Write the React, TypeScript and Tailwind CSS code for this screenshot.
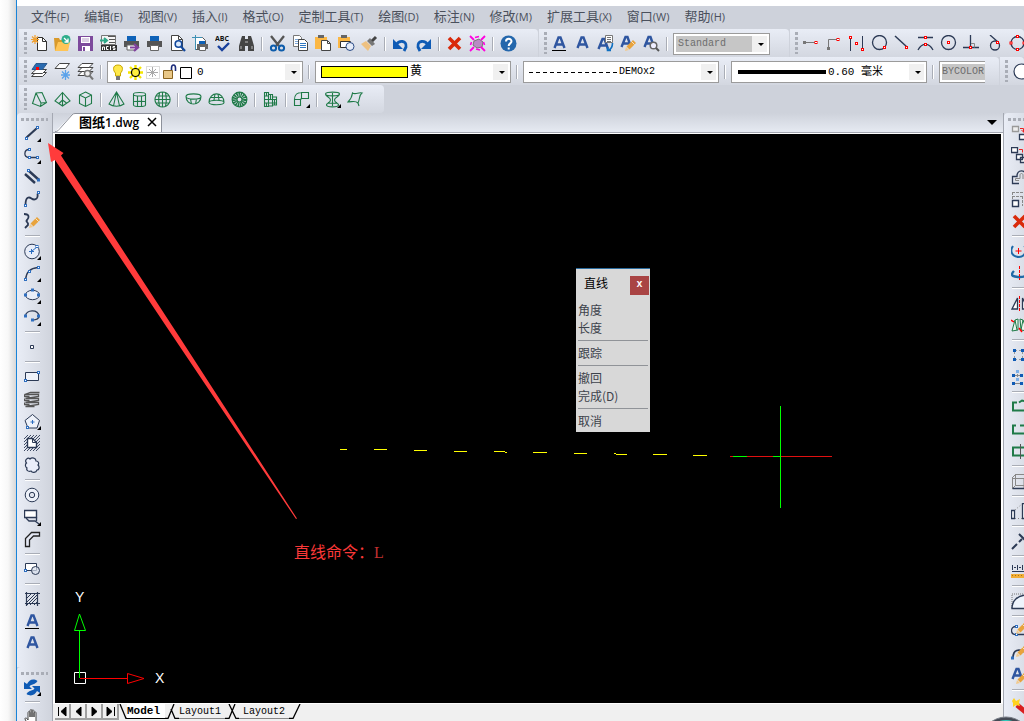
import type { ReactNode } from "react";

const GREEN = "#1f7a48";
const NAVY = "#2c3a55";
const BLUE = "#0f5bb5";
const RED = "#ff0000";

interface Item {
  name: string;
  icon: ReactNode;
}

type Entry = Item | "|";

// small square handle used by the drawing icons
function Pt({ x, y, c = "#2f6fc0" }: { x: number; y: number; c?: string }) {
  return <rect x={x - 1} y={y - 1} width="2" height="2" fill="#fff" stroke={c} />;
}

function Corner() {
  return <path d="M17 13v4h-4z" fill="#000" />;
}

function Pencil({ x = 0, y = 0 }: { x?: number; y?: number }) {
  return (
    <g transform={`translate(${x} ${y})`}>
      <path d="M0 11l1-4 3 3z" fill="#f3c98b" />
      <path d="M1.500 6.500L8 0l3 3-6.500 6.500z" fill="#e8a33d" />
      <path d="M6.500 1.500l3 3" stroke="#fff" strokeWidth="0.700" />
    </g>
  );
}

function LetterA({ line = false }: { line?: boolean }) {
  return (
    <>
      <path
        d="M3.500 13L7.500 2.500h2L13.500 13M5 9.500h7"
        fill="none"
        stroke="#2f56a0"
        strokeWidth="2.400"
      />
      {line && <path d="M1 15.500h14" stroke="#000" />}
    </>
  );
}

function SmallA() {
  return (
    <path
      d="M1.500 14L5.500 4h2L11 14M3 10.500h7"
      fill="none"
      stroke="#2f56a0"
      strokeWidth="2.400"
    />
  );
}

const cross = <path d="M3 3l11 11M14 3L3 14" stroke="#d92a0b" strokeWidth="3.600" />;

const standardBar: Entry[] = [
  {
    name: "New",
    icon: (
      <>
        <path d="M6.500 2.500h5l4 4v9h-9z" fill="#fff" stroke="#333" />
        <path d="M11.500 2.500v4h4" fill="none" stroke="#333" />
        <path d="M4 0v9M0 4.500h8M1 1.500l6 6M7 1.500l-6 6" stroke="#f0a030" strokeWidth="1.200" />
      </>
    ),
  },
  {
    name: "Open",
    icon: (
      <>
        <path d="M0 3h5l1 2h7v11H1z" fill="#d99a2b" />
        <path d="M4 7h12l-2 9H1z" fill="#ffc556" />
        <circle cx="12" cy="4.500" r="4.500" fill="#2fae8c" />
        <path d="M10 3l4 4M14 3.500V7h-3.500" stroke="#fff" strokeWidth="1.300" fill="none" />
      </>
    ),
  },
  {
    name: "Save",
    icon: (
      <>
        <path d="M1 1h15v15H1z" fill="#7d4a9c" />
        <path d="M4 2h9v6H4zM5 11h8v5H5z" fill="#fff" />
        <path d="M5 4h7M5 6h7" stroke="#b7a0c9" />
        <path d="M6 12h2v4H6z" fill="#7d4a9c" />
      </>
    ),
  },
  {
    name: "ACIS",
    icon: (
      <>
        <path d="M1.500.500h14v9h-14z" fill="#f5f5f5" stroke="#777" />
        <path d="M8 1.500h7.500M9 4.500h6M9 7.500h6" stroke="#555" strokeWidth="1.200" />
        <path d="M0 5.500h6M4 3l3 2.500L4 8" stroke="#2fa888" strokeWidth="2" fill="none" />
        <path d="M1 10h16v6H1z" fill="#333" />
        <path d="M2.500 15v-3h2v3M8.500 11.500h-2v3h2M10.500 11v4M15 11.500h-2V13h2v1.500h-2" stroke="#fff" fill="none" />
      </>
    ),
  },
  {
    name: "Export",
    icon: (
      <>
        <path d="M4 1h9v5H4z" fill="#0f62b8" />
        <path d="M1 6h15v6H1z" fill="#555" />
        <path d="M4 10h9v5H4z" fill="#fff" stroke="#666" />
        <path d="M7 12.500h7M11 9l4 3.500-4 3.500" stroke="#82429e" strokeWidth="2.200" fill="none" />
      </>
    ),
  },
  {
    name: "Print",
    icon: (
      <>
        <path d="M4 1h9v5H4z" fill="#0f62b8" />
        <path d="M1 6h15v6H1z" fill="#555" />
        <path d="M4.500 10.500h8v5h-8z" fill="#fff" stroke="#666" />
      </>
    ),
  },
  {
    name: "Preview",
    icon: (
      <>
        <path d="M2.500.500h7l4 4v11h-11z" fill="#fff" stroke="#444" />
        <path d="M9.500.500v4h4" fill="none" stroke="#444" />
        <circle cx="9.500" cy="9" r="3.300" fill="#dbe9fa" stroke="#12489c" strokeWidth="1.600" />
        <path d="M12 11.500l4 4.500" stroke="#12489c" strokeWidth="2.200" />
      </>
    ),
  },
  {
    name: "Page setup",
    icon: (
      <>
        <path d="M3.500 2.500h7l3 3v9h-10z" fill="#fff" stroke="#555" />
        <path d="M0 2.500h10M3.500 0v15" stroke="#3d91b5" />
        <path d="M7 6h6v3H7z" fill="#0f62b8" />
        <path d="M5 9h11v5H5z" fill="#666" />
        <path d="M7.500 11.500h6v4h-6z" fill="#fff" stroke="#666" />
      </>
    ),
  },
  {
    name: "Spelling",
    icon: (
      <>
        <text x="0" y="6" fontSize="7" fontWeight="700" fontFamily="Open Sans" fill="#111">
          ABC
        </text>
        <path d="M3 11l4 4 7-7" stroke="#173f9b" strokeWidth="2.400" fill="none" />
      </>
    ),
  },
  {
    name: "Find",
    icon: (
      <>
        <path d="M4 1h3v3h3V1h3l1 3 2 7v5h-6v-5H7v5H1v-5l2-7z" fill="#444" />
        <path d="M3 11v3M14 11v3M7 7h3" stroke="#bbb" />
      </>
    ),
  },
  "|",
  {
    name: "Cut",
    icon: (
      <>
        <path d="M2 1l8 10M15 1L7 11" stroke="#555" strokeWidth="2.300" />
        <circle cx="4.500" cy="13" r="2.600" fill="none" stroke="#0d5cab" strokeWidth="2" />
        <circle cx="12.500" cy="13" r="2.600" fill="none" stroke="#0d5cab" strokeWidth="2" />
      </>
    ),
  },
  {
    name: "Copy",
    icon: (
      <>
        <path d="M1.500.500h6l2 2v9h-8z" fill="#fff" stroke="#777" />
        <path d="M3 4.500h5M3 6.500h5M3 8.500h3" stroke="#7da7d8" />
        <path d="M6.500 4.500h6l3 3v8h-9z" fill="#fff" stroke="#444" />
        <path d="M8 8.500h6M8 10.500h6M8 12.500h6" stroke="#2f78c4" />
      </>
    ),
  },
  {
    name: "Paste",
    icon: (
      <>
        <path d="M0 2h12v12H0z" fill="#fbb744" />
        <path d="M3 0h6v3H3z" fill="#666" />
        <path d="M6.500 5.500h6l3 3v7h-9z" fill="#fff" stroke="#444" />
        <path d="M12.500 5.500v3h3" fill="none" stroke="#444" />
      </>
    ),
  },
  {
    name: "Paste block",
    icon: (
      <>
        <path d="M0 2h12v11H0z" fill="#fbb744" />
        <path d="M3 0h6v3H3z" fill="#666" />
        <path d="M2.500 6.500h10v6h-10z" fill="#fff" stroke="#333" />
        <circle cx="12" cy="11.500" r="4" fill="#e6ecf8" stroke="#2a4b86" />
      </>
    ),
  },
  {
    name: "Match properties",
    icon: (
      <>
        <path d="M0 9l5-3 5 5-3 5z" fill="#eec181" />
        <path d="M6 6l3-3 5 6-3 2z" fill="#777" />
        <path d="M11 6l4-4" stroke="#444" strokeWidth="3" />
      </>
    ),
  },
  "|",
  {
    name: "Undo",
    icon: (
      <>
        <path d="M4 10c3-5 11-5 10 2l-2 4" stroke={BLUE} strokeWidth="2.800" fill="none" />
        <path d="M1 4v10h10z" fill={BLUE} />
      </>
    ),
  },
  {
    name: "Redo",
    icon: (
      <>
        <path d="M13 10C10 5 2 5 3 12l2 4" stroke={BLUE} strokeWidth="2.800" fill="none" />
        <path d="M16 4v10H6z" fill={BLUE} />
      </>
    ),
  },
  "|",
  { name: "Delete", icon: cross },
  {
    name: "Purge",
    icon: (
      <>
        <path d="M5 6l5-2 4 3-1 5-5 1-4-3z" fill="#b98ac4" stroke="#777" />
        <path d="M1 1l4 4M16 1l-4 4M1 16l4-4M16 16l-4-4" stroke="#ff00e0" strokeWidth="1.800" />
        <path d="M6 2.500l4-1M11 15l-4-1M2.500 7l-1 3M14.500 7l1 3" stroke="#ff00e0" strokeWidth="1.600" />
      </>
    ),
  },
  "|",
  {
    name: "Help",
    icon: (
      <>
        <circle cx="8.500" cy="8.500" r="8" fill="#2467ac" />
        <path d="M6 6.500C6 3 11.500 3 11.500 6.300 11.500 8.500 8.700 8.300 8.700 11" stroke="#fff" strokeWidth="2" fill="none" />
        <path d="M7.700 12.500h2v2h-2z" fill="#fff" />
      </>
    ),
  },
];

const textBar: Entry[] = [
  { name: "Multiline text", icon: <LetterA line /> },
  { name: "Single text", icon: <LetterA /> },
  {
    name: "Text style",
    icon: (
      <>
        <SmallA />
        <path d="M8.500.500h7v7h-7z" fill="#fff" stroke="#777" />
        <path d="M10 2.500h4M10 4.500h4M10 6.500h4" stroke="#777" />
        <path d="M15.500 8c0 4-1 6-4 7M14 15.500h-3.500V12" stroke="#0f6fc0" strokeWidth="1.600" fill="none" />
      </>
    ),
  },
  {
    name: "Edit text",
    icon: (
      <>
        <g transform="translate(0 -2)">
          <SmallA />
        </g>
        <Pencil x={5} y={5} />
      </>
    ),
  },
  {
    name: "Find text",
    icon: (
      <>
        <g transform="translate(0 -2)">
          <SmallA />
        </g>
        <circle cx="10.500" cy="10.500" r="3.300" fill="#eef" stroke="#666" strokeWidth="1.500" />
        <path d="M13 13l3 3" stroke="#555" strokeWidth="2" />
      </>
    ),
  },
];

const snapBar: Entry[] = [
  {
    name: "Temporary track",
    icon: (
      <>
        <path d="M2 7.500h11" stroke="#777" />
        <path d="M1 6h3v3H1z" fill="#777" />
        <Pt x={14} y={7.5} c={RED} />
      </>
    ),
  },
  {
    name: "From",
    icon: (
      <>
        <path d="M3.500 13V4.500h9" stroke="#777" fill="none" />
        <path d="M2 12h3v3H2z" fill="#777" />
        <Pt x={13} y={4.5} c={RED} />
      </>
    ),
  },
  {
    name: "Midpoint between",
    icon: (
      <>
        <path d="M2.500 3v13M14.500 1v12" stroke={NAVY} />
        <Pt x={2.5} y={2.5} c={RED} />
        <Pt x={8.5} y={8.5} c={RED} />
        <Pt x={14.5} y={14.5} c={RED} />
      </>
    ),
  },
  {
    name: "Nearest",
    icon: (
      <>
        <circle cx="8.500" cy="7.500" r="7" fill="none" stroke={NAVY} strokeWidth="1.300" />
        <Pt x={13.5} y={12.5} c={RED} />
      </>
    ),
  },
  {
    name: "Endpoint",
    icon: (
      <>
        <path d="M1 1l12 11" stroke={NAVY} strokeWidth="1.500" />
        <Pt x={12.5} y={12.5} c={RED} />
      </>
    ),
  },
  {
    name: "Midpoint",
    icon: (
      <>
        <path d="M1 2.500h15M1 15C5 7.500 12 7.500 16 15" stroke={NAVY} strokeWidth="1.300" fill="none" />
        <Pt x={8.5} y={2.5} c={RED} />
        <Pt x={8.5} y={9.5} c={RED} />
      </>
    ),
  },
  {
    name: "Center",
    icon: (
      <>
        <circle cx="8.500" cy="7.500" r="7" fill="none" stroke={NAVY} strokeWidth="1.300" />
        <Pt x={8.5} y={7.5} c={RED} />
      </>
    ),
  },
  {
    name: "Perpendicular",
    icon: (
      <>
        <path d="M0 12.500h16M7.500 0v12" stroke={NAVY} strokeWidth="1.300" />
        <path d="M8 8.500h3.500v4" fill="none" stroke="#888" />
        <Pt x={7.5} y={12.5} c={RED} />
      </>
    ),
  },
  {
    name: "Tangent",
    icon: (
      <>
        <circle cx="9" cy="10.500" r="4.500" fill="none" stroke={NAVY} strokeWidth="1.300" />
        <path d="M4 0l8 7" stroke={NAVY} strokeWidth="1.300" />
        <Pt x={11.5} y={7.5} c={RED} />
      </>
    ),
  },
  {
    name: "Quadrant",
    icon: (
      <>
        <circle cx="8.500" cy="8" r="6.500" fill="none" stroke={NAVY} strokeWidth="1.300" />
        <Pt x={8.5} y={1.5} c={RED} />
        <Pt x={8.5} y={14.5} c={RED} />
        <Pt x={2} y={8} c={RED} />
        <Pt x={15} y={8} c={RED} />
      </>
    ),
  },
];

const sheet = "M5 0h11l-4 4H1z";

const layerBar: Entry[] = [
  {
    name: "Layers",
    icon: (
      <>
        <path d="M5 9.500h10.500l-4 4H.5z" fill="#fff" stroke="#444" />
        <path d="M5 6.500h10.500l-4 4H.5z" fill="#fff" stroke="#444" />
        <path d="M5 .5h11L11.500 6.500H1z" fill="#2a6bb0" stroke="#2a5a90" />
        <path d="M5 4h3v3H5z" fill={RED} />
      </>
    ),
  },
  {
    name: "Layer freeze",
    icon: (
      <>
        <path d="M5.500.500h10l-4 5H1z" fill="#fff" stroke="#444" />
        <path d="M11.500 7v10M7 12h9M8 8.500l7 7M15 8.500l-7 7" stroke="#5aa2ea" strokeWidth="1.300" />
      </>
    ),
  },
  {
    name: "Layer search",
    icon: (
      <>
        <path d={sheet} transform="translate(0 8.500)" fill="#fff" stroke="#444" />
        <path d={sheet} transform="translate(0 4.500)" fill="#fff" stroke="#444" />
        <path d={sheet} transform="translate(0 0.500)" fill="#fff" stroke="#444" />
        <circle cx="10.500" cy="10.500" r="3" fill="#eee" stroke="#777" strokeWidth="1.500" />
        <path d="M12.500 12.500l3.500 4" stroke="#777" strokeWidth="2" />
      </>
    ),
  },
];

const g = { fill: "none", stroke: GREEN, strokeWidth: 1.1 };

const solidBar: Entry[] = [
  { name: "Wedge", icon: <path {...g} d="M5 2l6-.5 4.500 10-6 4-8-3zM5 2l5 10-.5 3.500M10 12l5.500-.5" /> },
  { name: "Pyramid", icon: <path {...g} d="M8.500 1.500L1 10l7.500 5L16 10zM8.500 1.500V15M5 12.500L8.500 9l4 3" /> },
  { name: "Box", icon: <path {...g} d="M8.500 1l6 3v8.500l-6 3-6-3V4zM2.500 4l6 3 6-3M8.500 7v8.500" /> },
  "|",
  { name: "Cone", icon: <path {...g} d="M8.500 1L1 13c4 3 11 3 15 0zM8.500 1L5.500 15M8.500 1l3 14" /> },
  { name: "Cylinder", icon: <path {...g} d="M2.500 3c0-2 12-2 12 0v11c0 2-12 2-12 0zM2.500 3.500c0 2 12 2 12 0M6.500 5v10.500M10.500 5v10.500M2.500 11c0-1 12-1 12 0" /> },
  { name: "Sphere", icon: <path {...g} d="M8.500 1a7.500 7.500 0 1 0 .1 0M1 8.500h15M8.500 1v15M2.500 5h12M2.500 12h12M5.500 2c-1 4-1 9 0 13M11.500 2c1 4 1 9 0 13" /> },
  "|",
  { name: "Dish", icon: <path {...g} d="M1 5.500c0-3.500 15-3.500 15 0s-15 3.500-15 0c0 10 15 10 15 0M5.500 8l1 5M11.500 8l-1 5" /> },
  { name: "Dome", icon: <path {...g} d="M1 11.500c0-3 15-3 15 0s-15 3-15 0C1 0 16 0 16 11.500M6 9l1-6h3l1 6M3 6.500h11" /> },
  {
    name: "Torus",
    icon: (
      <>
        <circle cx="8.500" cy="8.500" r="5" fill="none" stroke={GREEN} strokeWidth="5" strokeDasharray="1.400 0.600" />
        <circle cx="8.500" cy="8.500" r="7.400" {...g} />
        <circle cx="8.500" cy="8.500" r="2.500" {...g} />
      </>
    ),
  },
  "|",
  { name: "Mesh", icon: <path {...g} d="M2.500 1.500h4v14h-4zM6.500 3.500h4v11.500h-4M10.500 6h4v8h-4M2.500 5h4M2.500 8.500h12M2.500 12h12M4.500 1.500V5M4.500 12v3.500M8.500 3.500v5M12.500 8.500v5" /> },
  "|",
  {
    name: "Faces",
    icon: (
      <>
        <path {...g} d="M1.500 8.500h6v6h-6zM8.500 1.500h7v6h-7zM1.500 8.500c0-5 3-7 7-7M7.500 8.500l1-1" />
        <Corner />
      </>
    ),
  },
  "|",
  {
    name: "Revolve",
    icon: (
      <>
        <path {...g} d="M1.500 3c0-2.500 14-2.500 14 0s-14 2.500-14 0c0 3 5 3 5 6s-4 3-4 5c0 2.500 12 2.500 12 0 0-2-4-2-4-5s5-3 5-6M2.500 13.500c0-2 12-2 12 0M8.500 2v13" />
        <Corner />
      </>
    ),
  },
  { name: "Edge surface", icon: <path {...g} d="M5.500 2c3 2 6-1 9.500 0-3 2-2 6-4 10-3-3-6-1-10-1 2-2 4-5 4.500-9zM11 12l1 3" /> },
];

const n = { fill: "none", stroke: NAVY, strokeWidth: 1.3 };

const drawBar: Entry[] = [
  {
    name: "直线",
    icon: (
      <>
        <path d="M2.500 12.500l10-9" stroke={NAVY} strokeWidth="2.200" />
        <Pt x={2.5} y={13.5} />
        <Pt x={13.5} y={2.5} />
        <Corner />
      </>
    ),
  },
  {
    name: "Polyline",
    icon: (
      <>
        <path {...n} d="M5 2.500C0 2.500-1 10.500 5 10.500h9" />
        <Pt x={5.5} y={2.5} />
        <Pt x={5.5} y={10.5} />
        <Pt x={13.5} y={10.5} />
        <Corner />
      </>
    ),
  },
  {
    name: "Double line",
    icon: (
      <>
        <path d="M1 5l10 9M5 2l10 9" stroke={NAVY} strokeWidth="2.400" />
        <Pt x={4.5} y={1.5} />
        <Pt x={14.5} y={11} />
      </>
    ),
  },
  {
    name: "Spline",
    icon: (
      <>
        <path {...n} strokeWidth={1.8} d="M1.500 14c0-9 4-8 6-6.500s7 2 6-5" />
        <Pt x={1.5} y={14.5} />
        <Pt x={14.5} y={1.5} />
      </>
    ),
  },
  {
    name: "Sketch",
    icon: (
      <>
        <path {...n} strokeWidth={1.8} d="M0 1c6 0 5 4 3 6s2 2 1 5l-3 3" />
        <Pencil x={5} y={4} />
      </>
    ),
  },
  "|",
  {
    name: "Circle",
    icon: (
      <>
        <circle cx="8" cy="8.500" r="7.300" fill="#e8edf8" stroke={NAVY} />
        <path d="M7.500 6v5M5 8.500h5M8 8l5-4" stroke="#2f6fc0" />
        <Pt x={13} y={3.5} />
        <Corner />
      </>
    ),
  },
  {
    name: "Arc",
    icon: (
      <>
        <path {...n} d="M1.500 15C2 7 7 3 14 2.500" />
        <Pt x={1.5} y={14.5} />
        <Pt x={5.5} y={6.5} />
        <Pt x={14.5} y={2.5} />
        <Corner />
      </>
    ),
  },
  {
    name: "Ellipse",
    icon: (
      <>
        <ellipse cx="8.500" cy="8" rx="7" ry="4.700" fill="#e8edf8" stroke={NAVY} />
        <Pt x={1.5} y={8} />
        <Pt x={14.5} y={8} />
        <Pt x={8.5} y={3} />
        <Corner />
      </>
    ),
  },
  {
    name: "Elliptical arc",
    icon: (
      <>
        <path {...n} d="M1.500 7C2 .5 14 0 15 7c0 4-4 4-7 4" />
        <Pt x={1.5} y={7} />
        <Pt x={14.5} y={7} />
        <Pt x={8.5} y={11} />
        <Corner />
      </>
    ),
  },
  "|",
  { name: "Point", icon: <path d="M6.500 6.500h3v3h-3z" fill="#fff" stroke={NAVY} /> },
  "|",
  {
    name: "Rectangle",
    icon: (
      <>
        <path d="M1.500 3.500h13v8h-13z" fill="#eef2fa" stroke={NAVY} />
        <Pt x={1.5} y={11.5} />
        <Pt x={14.5} y={3.5} />
      </>
    ),
  },
  {
    name: "Helix",
    icon: (
      <path
        d="M15.500 1.500h-9l-6 2h14v2l-13 2h13v2l-13 2h13v2l-13 2h9M.5 3.500v2h5M.5 7.500v2h5M.5 11.500v2h5"
        fill="none"
        stroke="#555"
        strokeWidth="1.300"
      />
    ),
  },
  {
    name: "Polygon",
    icon: (
      <>
        <path d="M8.500 1.500l7 6L13 15H4L1 7.500z" fill="#eef2fa" stroke={NAVY} />
        <path d="M8.500 7v4M6.500 9h4" stroke="#2f6fc0" />
        <Pt x={3.5} y={14.5} />
        <Corner />
      </>
    ),
  },
  {
    name: "Boundary",
    icon: (
      <>
        <path
          d="M0 4l4-4M0 7l7-7M0 10L10 0M0 13L13 0M0 16L16 0M3 16L16 3M6 16L16 6M9 16l7-7M12 16l4-4"
          stroke={NAVY}
          strokeWidth="0.900"
        />
        <path d="M3.500 3.500h5l4 4v5h-9z" fill="#fff" stroke={NAVY} strokeWidth="1.400" />
        <path d="M8.500 3.500v4h4" fill="none" stroke={NAVY} />
      </>
    ),
  },
  {
    name: "Revision cloud",
    icon: (
      <path
        d="M2.500 6C0 3 4 0 6 2c2-2 6-1 6 2 3 0 3 3 2 4 2 2 1 5-1 5-1 3-5 3-6 1-3 1-5-1-4-3-2-1-2-4-.5-5z"
        fill="#eaeefa"
        stroke={NAVY}
        strokeWidth="1.200"
      />
    ),
  },
  "|",
  {
    name: "Donut",
    icon: (
      <>
        <circle cx="8" cy="8" r="6.800" fill="#edf1f9" stroke={NAVY} />
        <circle cx="8" cy="8" r="2.700" fill="#dfe3ec" stroke={NAVY} />
      </>
    ),
  },
  {
    name: "Trace",
    icon: (
      <>
        <path d="M.5 1.500h12v7H.5z" fill="#fff" stroke={NAVY} strokeWidth="1.400" />
        <path {...n} d="M2 9l3 3h6l4 3M12.500 8.500V12" />
        <Corner />
      </>
    ),
  },
  {
    name: "Polysolid",
    icon: <path d="M1.500 15.500v-8l6-6h8v3.500h-6l-4 4v6.500z" fill="#e4e8f4" stroke="#222" strokeWidth="1.300" />,
  },
  "|",
  {
    name: "Insert block",
    icon: (
      <>
        <path d="M1.500 2.500h11v7h-11z" fill="#fff" stroke={NAVY} />
        <circle cx="11.500" cy="9.500" r="4" fill="#d9dfec" fillOpacity="0.700" stroke={NAVY} />
        <Pt x={1.5} y={9.5} />
      </>
    ),
  },
  "|",
  {
    name: "Hatch",
    icon: (
      <>
        <path d="M3 7l4-4M3 11l8-8M3 14L14 3M6 14l8-8M10 14l4-4" stroke={NAVY} />
        <path d="M1 2.500h15M1 12.500h15M2.500 1v14M13.500 1v14" stroke={NAVY} strokeWidth="1.200" />
      </>
    ),
  },
  { name: "Multiline text", icon: <LetterA line /> },
  { name: "Text", icon: <LetterA /> },
];

const viewBar: Entry[] = [
  {
    name: "Regen",
    icon: (
      <>
        <path d="M0 3v7h8L5.500 7.500c2-3 5-1 8-5.500C9-1 5 1 3 5z" fill={BLUE} />
        <path d="M16 14V7H8l2.500 2.500c-2 3-5 1-8 5.500 4.500 3 8.500 1 10.500-3z" fill={BLUE} />
        <Corner />
      </>
    ),
  },
  "|",
  {
    name: "Pan",
    icon: (
      <path
        d="M4 16L1 10c0-2 2-1 3 1V4c0-2 2-2 2 0v4-6c0-2 2-2 2 0v6-6c0-2 2-1 2 0v6-4c1-2 2-1 2 0v9l-2 3z"
        fill="#fff"
        stroke="#444"
      />
    ),
  },
];

const modifyBar: Entry[] = [
  {
    name: "Copy object",
    icon: (
      <>
        <path d="M1.500 1.500h6v5h-6z" fill="#eee" stroke="#999" strokeWidth="1.300" />
        <path d="M8.500 9.500h6v5h-6z" fill="#fff" stroke={NAVY} strokeWidth="1.300" />
        <path d="M9 3.500h3.500v4M10.500 5l2 2 2-2" stroke="#e22" fill="none" />
      </>
    ),
  },
  {
    name: "Copy multiple",
    icon: (
      <>
        <path d="M.5.500h6v5h-6zM5.500 7.500h6v5h-6zM9.500 10.500h6v5h-6z" fill="#fff" stroke={NAVY} strokeWidth="1.300" />
        <path d="M8 2.500h3.500v3" stroke="#e22" fill="none" />
      </>
    ),
  },
  {
    name: "Offset",
    icon: (
      <>
        <path {...n} d="M8 14.500H1.500v-7H6C6 0 15 0 15 7" />
        <path d="M8 11.500H4.500v-2H9V6c0-2 3-2 3 0v4" stroke="#888" fill="none" />
      </>
    ),
  },
  {
    name: "Scale",
    icon: (
      <>
        <path d="M1 1.500h15M1.500 1v14M1 5.500h11M11.500 5v10" stroke="#888" strokeDasharray="3 1" />
        <path d="M1.500 9.500h6v6h-6z" fill="#fff" stroke={NAVY} strokeWidth="1.400" />
      </>
    ),
  },
  { name: "Erase", icon: cross },
  "|",
  {
    name: "Rotate",
    icon: (
      <>
        <path d="M2 3c-4 6 0 11 6 11s9-8 5-11" stroke="#1f6aa8" strokeWidth="2" fill="none" />
        <path d="M7.500 5v6M4.500 8h6" stroke={RED} />
      </>
    ),
  },
  {
    name: "Rotate 3D",
    icon: (
      <>
        <path d="M3 6c-5 5 0 6 6 6s9-3 5-6" stroke="#1f6aa8" strokeWidth="2.400" fill="none" />
        <path d="M8.500 1v14" stroke={RED} strokeDasharray="3 1" />
      </>
    ),
  },
  "|",
  {
    name: "Mirror",
    icon: (
      <>
        <path d="M6.500 3v11H1zM11.500 3v11H17z" fill="#fff" stroke={NAVY} strokeWidth="1.300" />
        <path d="M8.500 1v16" stroke={RED} strokeDasharray="3 1" />
      </>
    ),
  },
  {
    name: "Mirror 3D",
    icon: (
      <>
        <path d="M4 3l3-1v11l-6 1zM9 2l3 1 4 11-6-1zM4 3l2 10M12 3l-2 10" fill="#eaf5ee" stroke={GREEN} />
        <path d="M0 3l3 2M8 11l3 4" stroke={RED} strokeWidth="1.500" />
      </>
    ),
  },
  "|",
  {
    name: "Array",
    icon: (
      <>
        <path d="M3 3.500h9M3 12.500h9M3.500 4v9M11.500 4v9" stroke="#999" strokeDasharray="3 2" />
        <path d="M2 2h3v3H2zM10 2h3v3h-3zM2 11h3v3H2zM10 11h3v3h-3z" fill={BLUE} />
      </>
    ),
  },
  {
    name: "Array 3D",
    icon: (
      <>
        <path d="M1 5h3v3H1zM9 5h3v3H9zM1 13h3v3H1zM9 13h3v3H9z" fill={BLUE} />
        <path d="M5 1h3v3H5zM13 1h3v3h-3zM5 9h3v3H5z" fill="#7db0e8" />
        <path d="M4 6.500h5M6.500 5v3M4 14.500h5" stroke="#888" />
      </>
    ),
  },
  "|",
  { name: "Trim", icon: <path d="M6 3.500H2v8h15M8 3.500l3-2 4 1" fill="none" stroke={GREEN} strokeWidth="2" /> },
  { name: "Break", icon: <path d="M5 4.500H2v8h15M9 4.500h8" fill="none" stroke={GREEN} strokeWidth="2" /> },
  {
    name: "Break at point",
    icon: (
      <>
        <path d="M17 4.500H2v8h15" fill="none" stroke={GREEN} strokeWidth="2" />
        <path d="M9.500 1v15" stroke="#555" />
      </>
    ),
  },
  "|",
  {
    name: "Align box",
    icon: (
      <>
        <path d="M4.500 1.500H17v11H4.500zM1 5.500h12v10M1.500 5v10.500l3-3M1 5l4-4M13 5l4-4" fill="none" stroke="#888" />
        <path d="M1.500 15.500h12" stroke={NAVY} strokeWidth="1.500" />
      </>
    ),
  },
  "|",
  {
    name: "Stretch",
    icon: (
      <>
        <path d="M.5 7.500h3v8h-3zM11.500.500h5v15h-5z" fill="#fff" stroke={NAVY} strokeWidth="1.300" />
        <path d="M4 7l7-6M4 15.500h7" stroke="#888" strokeDasharray="1 2" />
      </>
    ),
  },
  "|",
  { name: "Extend", icon: <path d="M1 16l5-5M8 9l3-3M8 1l8 8" stroke={NAVY} strokeWidth="2" /> },
  "|",
  {
    name: "Measure",
    icon: (
      <>
        <path d="M1.500 2v5M6.500 2v5M11.500 2v5M3 4.500h2M8 4.500h2M13 4.500h2M1 8.500h16" stroke={NAVY} />
        <path d="M0 11h17v4H0z" fill="#f2ae37" />
        <path d="M1 12.500h16" stroke="#a87213" strokeDasharray="1 2" />
      </>
    ),
  },
  "|",
  {
    name: "Fillet",
    icon: (
      <>
        <path d="M1 15V1h15" stroke="#777" strokeDasharray="1 1" fill="none" />
        <path d="M1 15.500C1 8 6 2 17 2v13.500z" fill="#eef4fc" stroke={NAVY} strokeWidth="1.400" />
      </>
    ),
  },
  "|",
  {
    name: "Edit polyline",
    icon: (
      <>
        <path {...n} d="M5 3.500c-6 0-6 8 0 8h10" />
        <Pt x={5.5} y={3.5} />
        <Pt x={5.5} y={11.5} />
        <Pencil x={5} y={0} />
      </>
    ),
  },
  {
    name: "Edit spline",
    icon: (
      <>
        <path {...n} strokeWidth={1.8} d="M2 13c0-9 6-9 12-6" />
        <Pt x={1.5} y={13} />
        <Pencil x={5} y={1} />
      </>
    ),
  },
  {
    name: "Edit text",
    icon: (
      <>
        <g transform="translate(0 -2)">
          <SmallA />
        </g>
        <Pencil x={5} y={6} />
      </>
    ),
  },
  "|",
  {
    name: "Explode",
    icon: (
      <>
        <path d="M6 8l11 9" stroke="#d81e1e" strokeWidth="5" />
        <path d="M3 1l2 3 4-2-1 4 1 3-4-1-3 2V6L1 4z" fill="#ffd21e" />
      </>
    ),
  },
];

const menus = [
  ["文件", "F"],
  ["编辑", "E"],
  ["视图", "V"],
  ["插入", "I"],
  ["格式", "O"],
  ["定制工具", "T"],
  ["绘图", "D"],
  ["标注", "N"],
  ["修改", "M"],
  ["扩展工具", "X"],
  ["窗口", "W"],
  ["帮助", "H"],
];

const promptGroups = [["角度", "长度"], ["跟踪"], ["撤回", "完成(D)"], ["取消"]];

// x1, x2, y of every visible dash of the line being drawn
const dashes = [
  [340, 347, 449],
  [374, 387, 449],
  [414, 427, 450],
  [454, 467, 451],
  [494, 505, 451],
  [505, 507, 452],
  [533, 547, 452],
  [574, 587, 453],
  [614, 616, 453],
  [616, 627, 454],
  [653, 667, 454],
  [693, 707, 455],
];

function Icon({ children }: { children: ReactNode }) {
  return (
    <svg width="17" height="17" viewBox="0 0 17 17" className="shrink-0" aria-hidden="true">
      {children}
    </svg>
  );
}

function Separator() {
  return (
    <div className="flex h-[27px] w-2 shrink-0 items-center justify-center">
      <div className="h-[14px] w-[2px] border-r border-white bg-[#a9adb6]" />
    </div>
  );
}

function Bar({ items = [], className = "", children }: { items?: Entry[]; className?: string; children?: ReactNode }) {
  return (
    <div
      role="toolbar"
      className={`flex h-7 items-end rounded-tr bg-linear-to-b from-[#e9edf6] to-[#d3d7e0] pl-[5px] ${className}`}
    >
      <div className="mr-px mb-[3px] h-[22px] w-[3px] shrink-0 bg-[repeating-linear-gradient(to_bottom,#a9adb6_0_3px,transparent_3px_5px)]" />
      {items.map((item, i) =>
        item === "|" ? (
          <Separator key={i} />
        ) : (
          <button key={i} aria-label={item.name} className="flex h-[27px] w-[23px] shrink-0 items-center justify-center">
            <Icon>{item.icon}</Icon>
          </button>
        )
      )}
      {children}
    </div>
  );
}

function SideBar({ items, className = "" }: { items: Entry[]; className?: string }) {
  return (
    <div
      role="toolbar"
      className={`flex w-9 shrink-0 flex-col items-center rounded-t bg-linear-to-r from-[#e9edf6] to-[#cfd3dc] pr-[5px] ${className}`}
    >
      <div className="mt-[5px] mb-px ml-[3px] h-[3px] w-[27px] shrink-0 bg-[repeating-linear-gradient(to_right,#a9adb6_0_3px,transparent_3px_5px)]" />
      {items.map((item, i) =>
        item === "|" ? (
          <div key={i} className="flex h-2 shrink-0 items-center">
            <div className="h-[2px] w-[15px] border-b border-white bg-[#a9adb6]" />
          </div>
        ) : (
          <button key={i} aria-label={item.name} className="flex h-[22px] shrink-0 items-end pb-[2px]">
            <Icon>{item.icon}</Icon>
          </button>
        )
      )}
    </div>
  );
}

interface ComboProps {
  label: string;
  value: string;
  width: string;
  select?: string;
  children?: ReactNode;
}

function Combo({ label, value, width, select = "text-[10px] text-black", children }: ComboProps) {
  return (
    <div
      className={`relative mx-[2px] mb-[2px] flex h-[22px] shrink-0 items-center border border-[#9b9b9b] bg-white p-[2px] ${width}`}
    >
      {children}
      <select
        aria-label={label}
        className={`h-full min-w-0 flex-1 appearance-none pl-[2px] font-['Liberation_Mono','Noto_Sans_CJK_SC',monospace] leading-4 ${select}`}
      >
        <option>{value}</option>
      </select>
      <span className="pointer-events-none flex h-full w-[15px] shrink-0 items-center justify-end bg-[#f0f0f0] pr-[3px]">
        <svg width="6" height="3" viewBox="0 0 6 3" aria-hidden="true">
          <path d="M0 0h6L3 3z" fill="#000" />
        </svg>
      </span>
    </div>
  );
}

function LayerState() {
  return (
    <>
      <Icon>
        <path d="M8 1C2 1 3 7 5.500 9v3h5V9C13 7 14 1 8 1z" fill="#ffe94a" stroke="#c9a800" />
        <path d="M6 12h4v4H6z" fill="#777" />
      </Icon>
      <Icon>
        <path d="M8.500 1v15M1 8.500h15M3 3l11 11M14 3L3 14" stroke="#f5e600" strokeWidth="2.400" />
        <circle cx="8.500" cy="8.500" r="4" fill="#ffef3e" stroke="#000" strokeWidth="1.200" />
      </Icon>
      <Icon>
        <path d="M8.500 3v10M3 8.500h11M5 5l7 7M12 5l-7 7" stroke="#aaa" />
        <path d="M2.500 2.500h13v12h-13z" fill="none" stroke="#bbb" strokeDasharray="1 1" />
      </Icon>
      <Icon>
        <path d="M10.500 7V4c0-4 4-4 4 0v3" fill="none" stroke="#1a2a7a" strokeWidth="1.600" />
        <path d="M2.500 6.500h9v8h-9z" fill="#e9c888" stroke="#8a6420" />
      </Icon>
      <Icon>
        <path d="M2.500 3.500h11v11h-11z" fill="#fff" stroke="#000" />
      </Icon>
    </>
  );
}

function Drawing() {
  return (
    <svg className="pointer-events-none absolute inset-0 z-10 h-full w-full overflow-visible" aria-hidden="true">
      <g transform="translate(-55 -134)">
        {dashes.map(([x1, x2, y]) => (
          <path key={x1} d={`M${x1} ${y + 0.5}H${x2}`} stroke="#ffff00" />
        ))}
        <path d="M730 456.500h102" stroke="#e01010" />
        <path d="M733 456.500h14M773 456.500h8M780.500 406v102" stroke="#00ff00" />
        <path d="M74.500 672.500h11v11h-11z" fill="none" stroke="#fff" />
        <path d="M79.500 678V630.500M74.500 630.500h11L79.500 614z" fill="none" stroke="#00ff00" />
        <path d="M80 678.500h47M127.500 673.500v10l16.500-5z" fill="none" stroke="#ff0000" />
        <path d="M48 143l15.500 10-2.500 2.500L177.500 334 297 518.500l-1 .5L172 335 55 160l-4 2z" fill="#ff3b3b" />
      </g>
    </svg>
  );
}

function Prompt() {
  return (
    <section className="absolute top-[134px] left-[521px] w-[74px] border-t border-[#2a6a9c] bg-[#d8d8d8] pb-[2px] text-xs text-[#3d434c]">
      <header className="flex h-8 items-center justify-between pr-px pl-2 text-black">
        <h2 className="pb-1">直线</h2>
        <button
          aria-label="关闭"
          className="flex size-[19px] items-center justify-center bg-[#a94444] font-['Liberation_Mono',monospace] text-[10px] font-bold text-white"
        >
          x
        </button>
      </header>
      {promptGroups.map((group, i) => (
        <div
          key={i}
          className={`mx-[2px] flex flex-col items-start ${i > 0 ? "mt-[3px] border-t border-[#909398] pt-[3px]" : ""}`}
        >
          {group.map((text) => (
            <button key={text} className="leading-[18px]">
              {text}
            </button>
          ))}
        </div>
      ))}
    </section>
  );
}

function Slash({ d, width = 14 }: { d: string; width?: number }) {
  return (
    <svg width={width} height="15" viewBox={`0 0 ${width} 15`} className="shrink-0" aria-hidden="true">
      <path d={d} fill="none" stroke="#000" strokeWidth="1.300" />
    </svg>
  );
}

const pagers = [
  ["First", "M3.500 3v9M11 3v9L6 7.500z"],
  ["Previous", "M10 3v9L5 7.500z"],
  ["Next", "M5 3v9l5-4.500z"],
  ["Last", "M11.500 3v9M4 3v9l5-4.500z"],
];

function LayoutTabs() {
  return (
    <nav className="flex h-[18px] shrink-0 items-start border-t border-white bg-[#f0f0f0] pl-[2px] font-['Liberation_Mono',monospace] text-[10px] leading-[15px] text-black">
      {pagers.map(([name, d]) => (
        <button key={name} aria-label={name} className="h-4 w-4 border-r-2 border-b-2 border-[#a0a0a0]">
          <svg width="14" height="14" viewBox="0 0 14 14" aria-hidden="true">
            <path d={d} fill="#000" stroke="#000" />
          </svg>
        </button>
      ))}
      <Slash d="M1 0l6 14.500h1" width={8} />
      <button className="h-[15px] border-b border-black bg-white pr-[5px] text-[11px] font-bold">Model</button>
      <Slash d="M0 14.500h3L9 0M6 5l4 9.500h4" />
      <button className="h-[15px] border-b border-[#888] pr-[4px]">Layout1</button>
      <Slash d="M0 14.500h4L10 0M4 0l7 14.500h3" />
      <button className="h-[15px] border-b border-[#888] px-[4px]">Layout2</button>
      <Slash d="M0 14.500h4L11 0" />
    </nav>
  );
}

export default function App() {
  return (
    <div className="flex h-screen overflow-hidden bg-white font-['Noto_Sans_CJK_SC',sans-serif]">
      <div className="w-[17px] shrink-0 border-r border-[#1a84d8] bg-linear-to-r from-white via-[#f8f8f8] to-[#d8d8d8]" />
      <div className="relative flex min-w-0 flex-1 flex-col border-t-[6px] border-white bg-[#ced2db]">
        <nav className="flex h-[23px] shrink-0 items-center gap-[15px] pb-[2px] pl-[14px] text-[13px] leading-5 whitespace-nowrap text-[#4a505c]">
          {menus.map(([label, key]) => (
            <button key={label} className="flex items-baseline">
              {label}
              <span className="font-['Open_Sans',sans-serif] text-[11px]">({key})</span>
            </button>
          ))}
        </nav>

        <div className="flex shrink-0 gap-px overflow-hidden pl-[2px]">
          <Bar items={standardBar} className="w-[519px] shrink-0" />
          <Bar items={textBar} className="w-[250px] shrink-0">
            <Separator />
            <Combo
              label="Text style"
              value="Standard"
              width="w-[97px]"
              select="bg-[#c6c6c6] text-[10px] text-[#6d6d6d]"
            />
          </Bar>
          <Bar items={snapBar} className="min-w-0 flex-1 overflow-hidden" />
        </div>

        <div className="flex shrink-0 gap-px overflow-hidden pl-[2px]">
          <Bar items={layerBar} className="min-w-0 flex-1 overflow-hidden">
            <Separator />
            <Combo label="Layer" value="0" width="w-[196px]" select="text-[11px] text-black">
              <LayerState />
            </Combo>
            <Separator />
            <Combo label="Color" value="黄" width="w-[196px]" select="text-xs text-black">
              <span className="ml-[3px] h-3 w-[87px] border border-black bg-[#ffff00]" />
            </Combo>
            <Separator />
            <Combo label="Linetype" value="DEMOx2" width="w-[196px]">
              <svg width="88" height="3" viewBox="0 0 88 3" className="ml-[3px] shrink-0" aria-hidden="true">
                <path d="M0 1.500h88" stroke="#000" strokeDasharray="4 3" />
              </svg>
            </Combo>
            <Separator />
            <Combo label="Lineweight" value="0.60 毫米" width="w-[196px]" select="text-[11px] text-black">
              <span className="ml-[4px] h-1 w-[88px] bg-black" />
            </Combo>
            <Separator />
            <div className="mb-[2px] ml-[2px] flex h-[22px] w-[46px] shrink-0 items-center overflow-hidden border border-r-0 border-[#9b9b9b] bg-white py-[2px] pl-[2px]">
              <select
                aria-label="Plot style"
                className="h-full w-full appearance-none bg-[#c6c6c6] font-['Liberation_Mono',monospace] text-[10px] leading-4 text-[#6d6d6d]"
              >
                <option>BYCOLOR</option>
              </select>
            </div>
          </Bar>
          <Bar
            items={[
              {
                name: "Circle",
                icon: <circle cx="9.500" cy="8.500" r="7.500" fill="#fff" stroke={NAVY} strokeWidth="1.200" />,
              },
            ]}
            className="w-6 shrink-0 overflow-hidden"
          />
        </div>

        <div className="flex shrink-0 pl-[2px]">
          <Bar items={solidBar} className="w-[365px] rounded-r" />
        </div>

        <div className="flex min-h-0 flex-1">
          <aside className="flex w-9 shrink-0 flex-col overflow-hidden border-r border-[#a4a8b2]">
            <SideBar items={drawBar} className="h-[554px]" />
            <SideBar items={viewBar} className="flex-1" />
          </aside>

          <main className="flex min-w-0 flex-1 flex-col">
            <div className="flex h-5 shrink-0 items-end justify-between border-b border-[#a4a8b2] bg-linear-to-b from-[#ced2db] to-[#e6eaf2] pr-[6px]">
              <div className="flex h-[19px] items-center">
                <svg width="22" height="19" viewBox="0 0 22 19" className="shrink-0" aria-hidden="true">
                  <path d="M2 19L19 1.500 22 0v19z" fill="#fff" />
                  <path d="M2 18.500c3 0 3-1 5-3L19 2q1-1.500 3-1.500" fill="none" stroke="#8d919b" />
                </svg>
                <div className="flex h-[19px] items-center gap-2 rounded-tr border-t border-r border-[#8d919b] bg-white pr-1 pb-[2px] pl-1 text-black">
                  <a href="#drawing" className="flex items-baseline text-[13px] leading-[16px] font-bold">
                    图纸
                    <span className="font-['Open_Sans',sans-serif] text-xs leading-[16px] font-semibold">1.dwg</span>
                  </a>
                  <button aria-label="关闭图纸">
                    <svg width="10" height="10" viewBox="0 0 10 10" aria-hidden="true">
                      <path d="M1 1l8 8M9 1L1 9" stroke="#000" strokeWidth="1.500" />
                    </svg>
                  </button>
                </div>
              </div>
              <button aria-label="图纸列表" className="pb-[7px]">
                <svg width="10" height="5" viewBox="0 0 10 5" aria-hidden="true">
                  <path d="M0 0h10L5 5z" fill="#000" />
                </svg>
              </button>
            </div>
            <div id="drawing" className="relative min-h-0 flex-1 border-t border-r-2 border-l-2 border-white bg-black">
              <Drawing />
              <span className="absolute top-[454px] left-[20px] font-['Liberation_Sans',sans-serif] text-[14px] leading-[18px] text-white">
                Y
              </span>
              <span className="absolute top-[535px] left-[100px] font-['Liberation_Sans',sans-serif] text-[14px] leading-[18px] text-white">
                X
              </span>
              <p className="absolute top-[407px] left-[239px] text-base leading-5 whitespace-nowrap text-[#fa3838]">
                直线命令：<span className="font-['Liberation_Serif',serif] text-[#c03030]">L</span>
              </p>
              <Prompt />
            </div>
            <LayoutTabs />
          </main>

          <aside className="w-[21px] shrink-0 overflow-hidden border-l border-[#a4a8b2]">
            <SideBar items={modifyBar} className="min-h-full" />
          </aside>
        </div>

        <svg
          width="52"
          height="52"
          viewBox="0 0 52 52"
          className="absolute -right-2 -bottom-[47px]"
          aria-hidden="true"
        >
          <circle cx="26" cy="26" r="25" fill="#454a55" stroke="#7a7f88" />
          <circle cx="26" cy="26" r="22" fill="#2fd0c0" />
        </svg>
      </div>
    </div>
  );
}
